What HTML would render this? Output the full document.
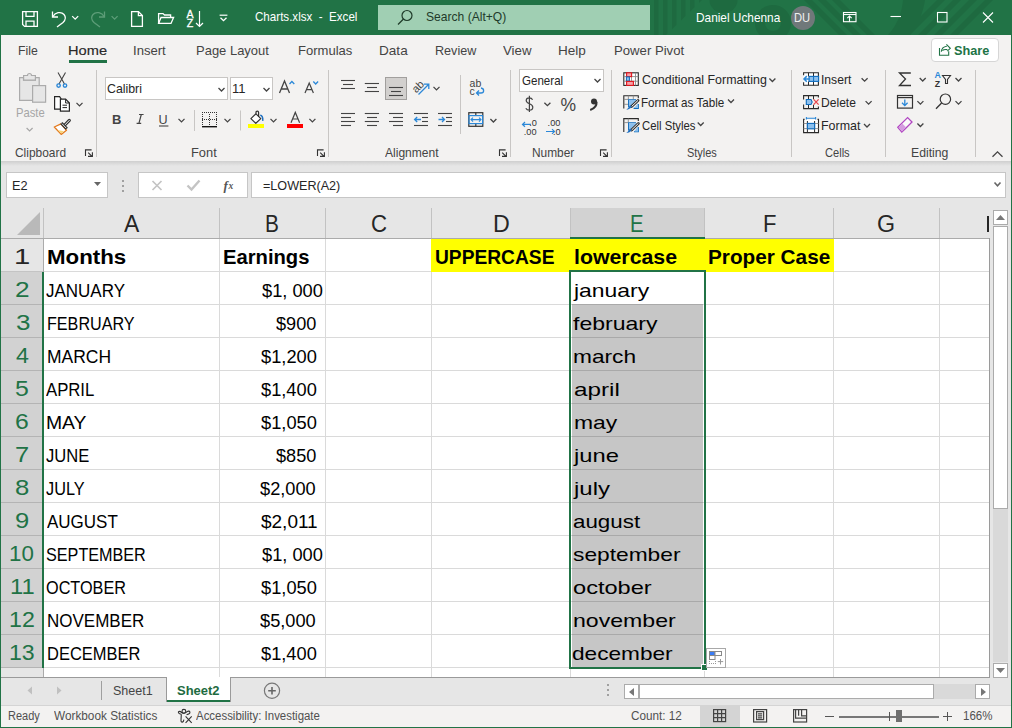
<!DOCTYPE html>
<html><head><meta charset="utf-8">
<style>
*{margin:0;padding:0;box-sizing:border-box}
html,body{width:1012px;height:728px;overflow:hidden;background:#217346;font-family:"Liberation Sans",sans-serif}
.a{position:absolute}
.t{position:absolute;white-space:nowrap;line-height:1}
svg{position:absolute;overflow:visible}
</style></head><body>
<div class="a" style="left:0px;top:0px;width:1012px;height:35px;background:#217346;"></div>
<svg style="left:0;top:0" width="1012" height="35" viewBox="0 0 1012 35"><defs><clipPath id="cp1"><path d="M652 0H702L666 35H652Z"/></clipPath></defs><g clip-path="url(#cp1)"><rect x="654" y="0" width="4.5" height="35" fill="#1e6a40"/><rect x="663" y="0" width="4.5" height="35" fill="#1e6a40"/><rect x="672" y="0" width="4.5" height="35" fill="#1e6a40"/><rect x="681" y="0" width="4.5" height="35" fill="#1e6a40"/><rect x="690" y="0" width="4.5" height="35" fill="#1e6a40"/><rect x="699" y="0" width="4.5" height="35" fill="#1e6a40"/></g><path d="M709.5 0A14 13 0 0 0 737.5 0Z" fill="#1e6a40"/><circle cx="773" cy="23" r="13" fill="none" stroke="#1e6a40" stroke-width="10"/><path d="M804 0L812 0L847 35L839 35Z" fill="#1e6a40"/><path d="M818 0L826 0L861 35L853 35Z" fill="#1e6a40"/><path d="M832 0L840 0L875 35L867 35Z" fill="#1e6a40"/><path d="M903 0L925 0C923 13 918 25 910 35L888 35C897 25 902 13 903 0Z" fill="#1e6a40"/><path d="M937 0L945 0L910 35L902 35Z" fill="#1e6a40"/><path d="M953 0L961 0L926 35L918 35Z" fill="#1e6a40"/><path d="M969 0L977 0L942 35L934 35Z" fill="#1e6a40"/><path d="M985 0L993 0L958 35L950 35Z" fill="#1e6a40"/></svg>
<svg style="left:0;top:0" width="240" height="35" viewBox="0 0 240 35"><g fill="none" stroke="#fff" stroke-width="1.3"><path d="M22.6 11.6H37.4V26.4H24.6L22.6 24.4Z"/><path d="M26 11.6V16.4H34V11.6"/><path d="M26 26.4V21.2H34V26.4"/><path d="M52.5 11.5V17H58"/><path d="M52.8 16.8C55 12.5 61 11 64 14.5C66.5 17.5 65 20.5 63 22.5L57 27"/><path d="M72.2 16.1L75.2 19.1L78.2 16.1" fill="none" stroke="#fff" stroke-width="1.3"/></g><g fill="none" stroke="#5d9d78" stroke-width="1.3"><path d="M104.5 11.5V17H99"/><path d="M104.2 16.8C102 12.5 96 11 93 14.5C90.5 17.5 92 20.5 94 22.5L100 27"/><path d="M111.6 16.1L114.6 19.1L117.6 16.1" fill="none" stroke="#5d9d78" stroke-width="1.3"/></g><g fill="none" stroke="#fff" stroke-width="1.3"><path d="M131.6 11.6H138.4L142.4 15.6V26.4H131.6Z"/><path d="M138.4 11.6V15.6H142.4"/><path d="M158.6 23.4V13.6H163L164.5 15H170.6V17.5"/><path d="M158.6 23.4L161 17.5H173.6L171 23.4Z"/></g><text x="186.6" y="18.2" font-size="10.6" font-weight="normal" stroke="#fff" stroke-width="0.3" fill="#fff" font-family="Liberation Sans">A</text><text x="186.8" y="27.2" font-size="10.6" font-weight="normal" stroke="#fff" stroke-width="0.3" fill="#fff" font-family="Liberation Sans">Z</text><g fill="none" stroke="#fff" stroke-width="1.2"><path d="M199.5 11V26.5M196 23L199.5 26.5L203 23"/><path d="M219.6 15.2H227.4"/><path d="M220.5 17.7L223.5 20.7L226.5 17.7" fill="none" stroke="#fff" stroke-width="1.3"/></g></svg>
<div class="t" style="left:255.28px;top:11.33px;font-size:12.6px;color:#fff;font-weight:normal;transform:scaleX(0.9207);transform-origin:0 0;">Charts.xlsx  -  Excel</div>
<div class="a" style="left:378px;top:5px;width:272px;height:25px;background:#a0cfb3;"></div>
<svg style="left:396px;top:9px;" width="18" height="18" viewBox="0 0 18 18"><g fill="none" stroke="#1f3b2a" stroke-width="1.2"><circle cx="11" cy="6.5" r="5"/><path d="M7.5 10L2 15.5"/></g></svg>
<div class="t" style="left:425.74px;top:11.33px;font-size:12.6px;color:#1f3b2a;font-weight:normal;transform:scaleX(0.9593);transform-origin:0 0;">Search (Alt+Q)</div>
<div class="t" style="left:695.98px;top:12.33px;font-size:12.6px;color:#fff;font-weight:normal;transform:scaleX(0.9402);transform-origin:0 0;">Daniel Uchenna</div>
<div class="a" style="left:791px;top:6px;width:24px;height:24px;border-radius:50%;background:#70787a"></div><div class="t" style="left:794.31px;top:11.84px;font-size:12px;color:#f0f0f0;font-weight:normal;transform:scaleX(0.9333);transform-origin:0 0;">DU</div>
<svg style="left:0;top:0" width="1012" height="35" viewBox="0 0 1012 35"><g fill="none" stroke="#fff" stroke-width="1.1"><rect x="843.5" y="12.5" width="12.5" height="9.2"/><path d="M843.5 14.5H856"/><path d="M849.5 21.7V16M847.3 18.2L849.5 16L851.7 18.2"/><path d="M890.5 16.5H901"/><rect x="937.5" y="12.5" width="9.5" height="9.5"/><path d="M983 12.5L993 22.5M993 12.5L983 22.5"/></g></svg>
<div class="a" style="left:1px;top:35px;width:1010px;height:126px;background:#f3f2f1;"></div>
<div class="t" style="left:17.56px;top:45.33px;font-size:12.6px;color:#444;font-weight:normal;transform:scaleX(0.9737);transform-origin:0 0;">File</div>
<div class="t" style="left:67.99px;top:45.33px;font-size:12.6px;color:#262626;font-weight:normal;transform:scaleX(1.1613);transform-origin:0 0;-webkit-text-stroke:0.15px #333">Home</div>
<div class="t" style="left:132.99px;top:45.33px;font-size:12.6px;color:#444;font-weight:normal;transform:scaleX(1.0398);transform-origin:0 0;">Insert</div>
<div class="t" style="left:196.03px;top:45.33px;font-size:12.6px;color:#444;font-weight:normal;transform:scaleX(1.0306);transform-origin:0 0;">Page Layout</div>
<div class="t" style="left:297.67px;top:45.33px;font-size:12.6px;color:#444;font-weight:normal;transform:scaleX(1.0362);transform-origin:0 0;">Formulas</div>
<div class="t" style="left:379.11px;top:45.33px;font-size:12.6px;color:#444;font-weight:normal;transform:scaleX(1.0784);transform-origin:0 0;">Data</div>
<div class="t" style="left:434.78px;top:45.33px;font-size:12.6px;color:#444;font-weight:normal;transform:scaleX(0.9998);transform-origin:0 0;">Review</div>
<div class="t" style="left:502.84px;top:45.33px;font-size:12.6px;color:#444;font-weight:normal;transform:scaleX(1.0531);transform-origin:0 0;">View</div>
<div class="t" style="left:557.67px;top:45.33px;font-size:12.6px;color:#444;font-weight:normal;transform:scaleX(1.0766);transform-origin:0 0;">Help</div>
<div class="t" style="left:614.35px;top:45.33px;font-size:12.6px;color:#444;font-weight:normal;transform:scaleX(1.0436);transform-origin:0 0;">Power Pivot</div>
<div class="a" style="left:69px;top:60px;width:38px;height:3px;background:#217346;"></div>
<div class="a" style="left:931px;top:38px;width:68px;height:24px;background:#fff;border:1px solid #d6d6d6;border-radius:4px"></div><svg style="left:0;top:0" width="1012" height="728" viewBox="0 0 1012 728"><g fill="none" stroke="#217346" stroke-width="1.1"><path d="M939.5 48V55.3H948.7V51.2"/><path d="M941.3 51.8C941.6 48.4 943.6 46.6 946.8 46.2"/><path d="M942.4 50.6C943.4 49.6 945.4 49.3 947.4 49.6"/><path d="M946.4 44.3L950.3 48.3L947.3 51.1"/></g></svg>
<div class="t" style="left:953.83px;top:44.00px;font-size:13px;color:#217346;font-weight:bold;transform:scaleX(0.9780);transform-origin:0 0;">Share</div>
<div class="a" style="left:96px;top:70px;width:1px;height:87px;background:#c8c6c4;"></div>
<div class="a" style="left:328px;top:70px;width:1px;height:87px;background:#c8c6c4;"></div>
<div class="a" style="left:510px;top:70px;width:1px;height:87px;background:#c8c6c4;"></div>
<div class="a" style="left:611px;top:70px;width:1px;height:87px;background:#c8c6c4;"></div>
<div class="a" style="left:791px;top:70px;width:1px;height:87px;background:#c8c6c4;"></div>
<div class="a" style="left:885px;top:70px;width:1px;height:87px;background:#c8c6c4;"></div>
<div class="a" style="left:975px;top:70px;width:1px;height:87px;background:#c8c6c4;"></div>
<div class="t" style="left:15.04px;top:146.67px;font-size:12.2px;color:#444;font-weight:normal;transform:scaleX(0.9778);transform-origin:0 0;">Clipboard</div>
<div class="t" style="left:190.72px;top:146.67px;font-size:12.2px;color:#444;font-weight:normal;transform:scaleX(1.0550);transform-origin:0 0;">Font</div>
<div class="t" style="left:384.73px;top:146.67px;font-size:12.2px;color:#444;font-weight:normal;transform:scaleX(0.9892);transform-origin:0 0;">Alignment</div>
<div class="t" style="left:531.55px;top:146.67px;font-size:12.2px;color:#444;font-weight:normal;transform:scaleX(0.9761);transform-origin:0 0;">Number</div>
<div class="t" style="left:686.86px;top:146.67px;font-size:12.2px;color:#444;font-weight:normal;transform:scaleX(0.8992);transform-origin:0 0;">Styles</div>
<div class="t" style="left:825.33px;top:146.67px;font-size:12.2px;color:#444;font-weight:normal;transform:scaleX(0.9095);transform-origin:0 0;">Cells</div>
<div class="t" style="left:911.24px;top:146.67px;font-size:12.2px;color:#444;font-weight:normal;transform:scaleX(1.0036);transform-origin:0 0;">Editing</div>
<svg style="left:0;top:0" width="1012" height="728" viewBox="0 0 1012 728"><path d="M85.5 156V149.9H91.6" fill="none" stroke="#333" stroke-width="1.1"/><path d="M88.2 152.6L92 156.4M88 156.4H92.4V152.2" fill="none" stroke="#333" stroke-width="1.1"/><path d="M317.5 156V149.9H323.6" fill="none" stroke="#333" stroke-width="1.1"/><path d="M320.2 152.6L324 156.4M320 156.4H324.4V152.2" fill="none" stroke="#333" stroke-width="1.1"/><path d="M499.5 156V149.9H505.6" fill="none" stroke="#333" stroke-width="1.1"/><path d="M502.2 152.6L506 156.4M502 156.4H506.4V152.2" fill="none" stroke="#333" stroke-width="1.1"/><path d="M600.5 156V149.9H606.6" fill="none" stroke="#333" stroke-width="1.1"/><path d="M603.2 152.6L607 156.4M603 156.4H607.4V152.2" fill="none" stroke="#333" stroke-width="1.1"/><path d="M992.5 156.8L997.5 151.8L1002.5 156.8" fill="none" stroke="#444" stroke-width="1.3"/></svg>
<div class="t" style="left:16.13px;top:107.37px;font-size:12.2px;color:#a6a6a6;font-weight:normal;transform:scaleX(0.9219);transform-origin:0 0;">Paste</div>
<div class="a" style="left:105px;top:77px;width:123px;height:23px;background:#fff;border:1px solid #c8c6c4"></div><div class="t" style="left:107.38px;top:82.67px;font-size:12.2px;color:#262626;font-weight:normal;transform:scaleX(1.0123);transform-origin:0 0;">Calibri</div>
<div class="a" style="left:230px;top:77px;width:43px;height:23px;background:#fff;border:1px solid #c8c6c4"></div><div class="t" style="left:231.62px;top:82.67px;font-size:12.2px;color:#262626;font-weight:normal;transform:scaleX(1.0687);transform-origin:0 0;">11</div>
<div class="a" style="left:519px;top:69px;width:85px;height:23px;background:#fff;border:1px solid #c8c6c4"></div><div class="t" style="left:521.88px;top:74.67px;font-size:12.2px;color:#262626;font-weight:normal;transform:scaleX(0.9490);transform-origin:0 0;">General</div>
<div class="t" style="left:642.17px;top:74.13px;font-size:12.6px;color:#262626;font-weight:normal;transform:scaleX(0.9851);transform-origin:0 0;">Conditional Formatting</div>
<div class="t" style="left:641.36px;top:96.93px;font-size:12.6px;color:#262626;font-weight:normal;transform:scaleX(0.9247);transform-origin:0 0;">Format as Table</div>
<div class="t" style="left:642.19px;top:120.03px;font-size:12.6px;color:#262626;font-weight:normal;transform:scaleX(0.8990);transform-origin:0 0;">Cell Styles</div>
<div class="t" style="left:820.85px;top:74.13px;font-size:12.6px;color:#262626;font-weight:normal;transform:scaleX(0.9626);transform-origin:0 0;">Insert</div>
<div class="t" style="left:820.85px;top:97.03px;font-size:12.6px;color:#262626;font-weight:normal;transform:scaleX(0.9594);transform-origin:0 0;">Delete</div>
<div class="t" style="left:820.85px;top:119.93px;font-size:12.6px;color:#262626;font-weight:normal;transform:scaleX(0.9884);transform-origin:0 0;">Format</div>
<svg style="left:0;top:0" width="1012" height="728" viewBox="0 0 1012 728"><g stroke="#ababab" stroke-width="1.2" fill="#e6e6e6"><path d="M19.6 77.6H23.5V80.2H35.4V77.6H39.2V100.4H19.6Z"/><path d="M23.6 80.2V75.5H27.5A2 2 0 0 1 31.5 75.5H35.4V80.2Z"/><rect x="32.6" y="85.6" width="13" height="16.6"/></g><path d="M26.6 128.0L29.6 131.0L32.6 128.0" fill="none" stroke="#a6a6a6" stroke-width="1.2"/><g fill="none" stroke="#444" stroke-width="1.1"><path d="M58 72.5L64.5 84M65.5 72.5L59 84"/></g><g fill="none" stroke="#2b88d8" stroke-width="1.4"><circle cx="58.6" cy="85.6" r="1.7"/><circle cx="65" cy="85.6" r="1.7"/></g><g fill="#fff" stroke="#262626" stroke-width="1.2"><path d="M54.6 96.6H59.6L61 98.6V109.2H54.6Z"/><path d="M60.4 99.2H65.6L69.4 103V111.2H60.4Z"/></g><path d="M62.5 105.2H67M62.5 107.6H67" stroke="#262626" stroke-width="1"/><path d="M65.6 99.2V103H69.4" fill="none" stroke="#262626" stroke-width="1"/><path d="M76.5 102.9L79.5 105.9L82.5 102.9" fill="none" stroke="#444" stroke-width="1.3"/><path d="M54.3 127L60.9 123.9L66.5 130.2L61.2 134.4Z" fill="#fff" stroke="#e3791e" stroke-width="1.3" stroke-linejoin="round"/><path d="M57.5 130L64 131.2L61.2 133.4Z" fill="#f7d57a"/><path d="M64.3 125.5L69.3 120.4" stroke="#333" stroke-width="3.2" stroke-linecap="round"/><path d="M64.3 125.5L69.3 120.4" stroke="#fff" stroke-width="1" stroke-linecap="round"/><path d="M61.3 122.9L66.8 128.8" stroke="#333" stroke-width="3"/><path d="M61.9 123.6L66.2 128.1" stroke="#fff" stroke-width="0.9"/><path d="M218.5 88.0L221.5 91.0L224.5 88.0" fill="none" stroke="#444" stroke-width="1.3"/><path d="M263.5 88.0L266.5 91.0L269.5 88.0" fill="none" stroke="#444" stroke-width="1.3"/><path d="M279.5 93L284.5 81L289.5 93M281.3 89H287.7" fill="none" stroke="#444" stroke-width="1.3"/><path d="M289.5 84L291.9 81.5L294.3 84" fill="none" stroke="#2b88d8" stroke-width="1.3"/><path d="M305 93L309.2 83L313.4 93M306.6 89.6H311.8" fill="none" stroke="#444" stroke-width="1.2"/><path d="M313.3 81.5L315.7 84L318.1 81.5" fill="none" stroke="#2b88d8" stroke-width="1.3"/><text x="112" y="124" font-size="13" font-weight="bold" fill="#444" font-family="Liberation Sans">B</text><path d="M139 114.5H143.6M136.6 123.4H141.2M141.3 114.5L138.9 123.4" fill="none" stroke="#444" stroke-width="1.2"/><text x="158.6" y="123.5" font-size="12.6" fill="#444" font-family="Liberation Sans">U</text><path d="M159 126H168.4" stroke="#444" stroke-width="1.1"/><path d="M178.5 118.9L181.5 121.9L184.5 118.9" fill="none" stroke="#444" stroke-width="1.3"/><rect x="194" y="110" width="1" height="21" fill="#c8c6c4"/><rect x="240" y="110.5" width="1" height="20" fill="#c8c6c4"/><g fill="#333"><rect x="202" y="112" width="1" height="1"/><rect x="202" y="119" width="1" height="1"/><rect x="204" y="112" width="1" height="1"/><rect x="204" y="119" width="1" height="1"/><rect x="206" y="112" width="1" height="1"/><rect x="206" y="119" width="1" height="1"/><rect x="208" y="112" width="1" height="1"/><rect x="208" y="119" width="1" height="1"/><rect x="210" y="112" width="1" height="1"/><rect x="210" y="119" width="1" height="1"/><rect x="212" y="112" width="1" height="1"/><rect x="212" y="119" width="1" height="1"/><rect x="214" y="112" width="1" height="1"/><rect x="214" y="119" width="1" height="1"/><rect x="216" y="112" width="1" height="1"/><rect x="216" y="119" width="1" height="1"/><rect x="202" y="114" width="1" height="1"/><rect x="209" y="114" width="1" height="1"/><rect x="216" y="114" width="1" height="1"/><rect x="202" y="116" width="1" height="1"/><rect x="209" y="116" width="1" height="1"/><rect x="216" y="116" width="1" height="1"/><rect x="202" y="118" width="1" height="1"/><rect x="209" y="118" width="1" height="1"/><rect x="216" y="118" width="1" height="1"/><rect x="202" y="120" width="1" height="1"/><rect x="209" y="120" width="1" height="1"/><rect x="216" y="120" width="1" height="1"/><rect x="202" y="122" width="1" height="1"/><rect x="209" y="122" width="1" height="1"/><rect x="216" y="122" width="1" height="1"/><rect x="202" y="124" width="1" height="1"/><rect x="209" y="124" width="1" height="1"/><rect x="216" y="124" width="1" height="1"/></g><rect x="202" y="126" width="15" height="1.4" fill="#111"/><path d="M224.5 118.9L227.5 121.9L230.5 118.9" fill="none" stroke="#444" stroke-width="1.3"/><path d="M250.9 118.6L256 113.8L260.8 118.6L255.8 123.3Z" fill="#fff" stroke="#333" stroke-width="1.2" stroke-linejoin="round"/><path d="M256 113.8V112.4A1.3 1.3 0 0 1 258.6 112.4V117" fill="none" stroke="#333" stroke-width="1.2"/><path d="M260.2 115.2C262 115.4 263.2 117.4 262.7 120.8" fill="none" stroke="#1e6fc0" stroke-width="1.5"/><rect x="248" y="124" width="16" height="4" fill="#ffff00"/><path d="M270.5 118.9L273.5 121.9L276.5 118.9" fill="none" stroke="#444" stroke-width="1.3"/><path d="M291 122.7L295.3 112.4L299.6 122.7M292.6 119H298" fill="none" stroke="#444" stroke-width="1.2"/><rect x="287" y="124" width="16" height="4" fill="#ff0000"/><path d="M309.4 118.9L312.4 121.9L315.4 118.9" fill="none" stroke="#444" stroke-width="1.3"/><path d="M341 80.5H355" stroke="#444" stroke-width="1.1"/><path d="M343 84.5H353" stroke="#444" stroke-width="1.1"/><path d="M341 88.5H355" stroke="#444" stroke-width="1.1"/><path d="M364.8 83.5H379" stroke="#444" stroke-width="1.1"/><path d="M367 87.5H377" stroke="#444" stroke-width="1.1"/><path d="M364.8 91.5H379" stroke="#444" stroke-width="1.1"/><rect x="385.5" y="77.5" width="21" height="22" fill="#d2d0ce" stroke="#a19f9d" stroke-width="1"/><path d="M389 87.5H403" stroke="#444" stroke-width="1.1"/><path d="M391 91.5H401" stroke="#444" stroke-width="1.1"/><path d="M389 95.5H403" stroke="#444" stroke-width="1.1"/><path d="M341 113.5H355" stroke="#444" stroke-width="1.1"/><path d="M341 117.5H351" stroke="#444" stroke-width="1.1"/><path d="M341 121.5H355" stroke="#444" stroke-width="1.1"/><path d="M341 125.5H351" stroke="#444" stroke-width="1.1"/><path d="M364.8 113.5H379" stroke="#444" stroke-width="1.1"/><path d="M367 117.5H377" stroke="#444" stroke-width="1.1"/><path d="M364.8 121.5H379" stroke="#444" stroke-width="1.1"/><path d="M367 125.5H377" stroke="#444" stroke-width="1.1"/><path d="M389 113.5H403" stroke="#444" stroke-width="1.1"/><path d="M393 117.5H403" stroke="#444" stroke-width="1.1"/><path d="M389 121.5H403" stroke="#444" stroke-width="1.1"/><path d="M393 125.5H403" stroke="#444" stroke-width="1.1"/><path d="M414 113.5H428" stroke="#444" stroke-width="1.1"/><path d="M422 117.5H428" stroke="#444" stroke-width="1.1"/><path d="M422 121.5H428" stroke="#444" stroke-width="1.1"/><path d="M414 125.5H428" stroke="#444" stroke-width="1.1"/><path d="M421 119.5H414.6M417.2 117L414.6 119.5L417.2 122" fill="none" stroke="#2b88d8" stroke-width="1.3"/><path d="M438 113.5H452" stroke="#444" stroke-width="1.1"/><path d="M446 117.5H452" stroke="#444" stroke-width="1.1"/><path d="M446 121.5H452" stroke="#444" stroke-width="1.1"/><path d="M438 125.5H452" stroke="#444" stroke-width="1.1"/><path d="M438.5 119.5H444.5M442 117L444.5 119.5L442 122" fill="none" stroke="#2b88d8" stroke-width="1.3"/><text x="0" y="0" font-size="11" fill="#444" font-family="Liberation Sans" transform="translate(416.2 93.5) rotate(-45)">ab</text><path d="M418.5 94.5L428.5 84.5M424 84.2H428.8V89" fill="none" stroke="#2b88d8" stroke-width="1.3"/><path d="M433.5 86.9L436.5 89.9L439.5 86.9" fill="none" stroke="#444" stroke-width="1.3"/><rect x="460" y="75" width="1" height="59" fill="#c8c6c4"/><text x="469.6" y="87.4" font-size="10.5" fill="#444" font-family="Liberation Sans">ab</text><text x="469.6" y="95" font-size="10.5" fill="#444" font-family="Liberation Sans">c</text><path d="M481 88C484.5 88.5 484.5 93 481 93H476.5M479 90.5L476.5 93L479 95.5" fill="none" stroke="#2b88d8" stroke-width="1.3"/><g fill="none" stroke="#333" stroke-width="1.2"><rect x="468.8" y="112.7" width="14" height="13.6"/><path d="M475.8 112.7V115.5M475.8 123.5V126.3"/></g><rect x="469" y="115.6" width="13.6" height="8" fill="none" stroke="#2b88d8" stroke-width="1.2"/><path d="M471 119.6H481M473 117.6L471 119.6L473 121.6M479 117.6L481 119.6L479 121.6" fill="none" stroke="#2b88d8" stroke-width="1.1"/><path d="M490.4 119.0L493.4 122.0L496.4 119.0" fill="none" stroke="#444" stroke-width="1.3"/><path d="M594.5 79.0L597.5 82.0L600.5 79.0" fill="none" stroke="#444" stroke-width="1.3"/><path d="M532.6 99.8C531.8 98.2 530.6 97.8 529.3 97.8C527.3 97.8 526.2 99 526.2 100.6C526.2 104.4 532.8 103.2 532.8 107.2C532.8 109 531.4 110.2 529.3 110.2C527.8 110.2 526.6 109.6 525.8 108.2M529.4 95.8V112" fill="none" stroke="#444" stroke-width="1.2"/><path d="M544.4 102.7L547.4 105.7L550.4 102.7" fill="none" stroke="#444" stroke-width="1.3"/><text x="560.6" y="111.2" font-size="17.5" fill="#444" font-family="Liberation Sans">%</text><circle cx="594" cy="101.6" r="3" fill="#333"/><path d="M596.6 101.8C596.8 105.5 594.5 108.6 590.2 110" fill="none" stroke="#333" stroke-width="2"/><text x="529.2" y="126.4" font-size="9.2" fill="#333" font-family="Liberation Sans">.0</text><text x="523.8" y="134.8" font-size="9.2" fill="#333" font-family="Liberation Sans">.00</text><path d="M531 124.4H522.5M525 122L522.5 124.4L525 126.8" fill="none" stroke="#2b88d8" stroke-width="1.2"/><text x="547.6" y="126.4" font-size="9.2" fill="#333" font-family="Liberation Sans">.00</text><text x="553" y="134.8" font-size="9.2" fill="#333" font-family="Liberation Sans">.0</text><path d="M546 131.5H554.5M552 129.1L554.5 131.5L552 133.9" fill="none" stroke="#2b88d8" stroke-width="1.2"/><rect x="623.8" y="72.8" width="14.5" height="12.6" fill="#fff" stroke="#2a2a2a" stroke-width="1.1"/><path d="M623.8 76.6H638.3M623.8 81.2H638.3M635.5 72.8V85.4M631.5 76.6V81.2" stroke="#8a8a8a" stroke-width="0.9"/><rect x="626.6" y="72.8" width="5" height="3.8" fill="#f7a1a8" stroke="#e0161e" stroke-width="1.1"/><rect x="626.4" y="76.9" width="3" height="4.1" fill="#8cc0ee" stroke="#0f6cbd" stroke-width="1"/><rect x="626.6" y="81.4" width="6.8" height="4" fill="#f7a1a8" stroke="#e0161e" stroke-width="1.1"/><path d="M623.8 108.6V95.7H638.3V98.2" fill="none" stroke="#2a2a2a" stroke-width="1.1"/><path d="M623.8 99.4H628.6M623.8 104.3H628.6M628.4 95.7V99.2M633.3 95.7V99.2" stroke="#8a8a8a" stroke-width="0.9"/><path d="M628.6 107V99.7H636" fill="#8cc0ee" stroke="#0f6cbd" stroke-width="1.1"/><path d="M629 100H637L629 108Z" fill="#8cc0ee"/><path d="M638.3 104V108.4H633.6" fill="#8cc0ee" stroke="#0f6cbd" stroke-width="1.1"/><path d="M638 103L634.5 108H638Z" fill="#8cc0ee"/><path d="M638 100.4L631.5 106.6" stroke="#333" stroke-width="2.8" stroke-linecap="round"/><path d="M638 100.4L631.5 106.6" stroke="#fff" stroke-width="1"/><path d="M626.3 109.7C628.6 109.6 630.6 108.8 631.8 106.6L630.2 105.2C628.6 106.6 628.3 108.6 626.3 109.7Z" fill="#1e6fc0"/><path d="M728.0 99.5L731 102.5L734.0 99.5" fill="none" stroke="#444" stroke-width="1.3"/><path d="M623.8 132V118.6H638.3V121" fill="none" stroke="#2a2a2a" stroke-width="1.1"/><path d="M623.8 122.6H628.3M628.3 118.6V122.4" stroke="#8a8a8a" stroke-width="0.9"/><path d="M628.6 130.5V122.8H636" fill="none" stroke="#0f6cbd" stroke-width="1.1"/><path d="M629 123.2H637L629 131.2Z" fill="#8cc0ee"/><path d="M638.3 127V131.8H634" fill="#8cc0ee" stroke="#0f6cbd" stroke-width="1.1"/><path d="M638 126L634.5 131.5H638Z" fill="#8cc0ee"/><path d="M638.4 123.4L631.6 130" stroke="#333" stroke-width="2.8" stroke-linecap="round"/><path d="M638.4 123.4L631.6 130" stroke="#fff" stroke-width="1"/><path d="M626.3 133C628.6 132.9 630.6 132.1 631.8 130L630.2 128.6C628.6 130 628.3 131.9 626.3 133Z" fill="#1e6fc0"/><path d="M769.4 78.5L772.4 81.5L775.4 78.5" fill="none" stroke="#444" stroke-width="1.3"/><path d="M697.7 122.5L700.7 125.5L703.7 122.5" fill="none" stroke="#444" stroke-width="1.3"/><path d="M803.6 75.2V72.7H818.4V85.3H803.6V82.2" fill="#fff" stroke="#2a2a2a" stroke-width="1.1"/><path d="M808.5 72.7V76.4M813.5 72.7V76.4M808.5 81.4V85.3M813.5 81.4V85.3" stroke="#2a2a2a" stroke-width="1"/><rect x="809" y="76.4" width="9.6" height="5" fill="#8cc0ee" stroke="#0f6cbd" stroke-width="1.1"/><path d="M813.6 76.4V81.4" stroke="#0f6cbd" stroke-width="1"/><path d="M809.8 78.9H804.2M806.8 76.1L804 78.9L806.8 81.7" fill="none" stroke="#2b88d8" stroke-width="1.5"/><path d="M861.6 78.2L864.6 81.2L867.6 78.2" fill="none" stroke="#444" stroke-width="1.3"/><path d="M803.6 99.4V95.6H818.4V97.4M803.6 104.6V108.6H818.4V106.6" fill="none" stroke="#2a2a2a" stroke-width="1.1"/><path d="M808.5 95.6V99.2M813.5 95.6V99.2M808.5 104.8V108.6M813.5 104.8V108.6" stroke="#2a2a2a" stroke-width="1"/><path d="M806.3 99.5H811L812.2 102L811 104.5H806.3Z" fill="#8cc0ee" stroke="#0f6cbd" stroke-width="1.1"/><path d="M813.6 99.4L818.6 104.6M818.6 99.4L813.6 104.6" stroke="#e8474c" stroke-width="1.3"/><path d="M865.6 101.1L868.6 104.1L871.6 101.1" fill="none" stroke="#444" stroke-width="1.3"/><path d="M804.6 119.4H803.6V132.6H818.5V119.4H817.5" fill="#fff" stroke="#2a2a2a" stroke-width="1.1"/><path d="M807.4 121V132.6M814.6 121V132.6" stroke="#2a2a2a" stroke-width="1"/><path d="M803.6 123.5H818.5M803.6 128.6H818.5" stroke="#8a8a8a" stroke-width="0.9"/><rect x="807.4" y="123.4" width="7.2" height="5.4" fill="#8cc0ee" stroke="#0f6cbd" stroke-width="1.1"/><path d="M806.4 118.2H815.6M806.4 116.9V119.5M815.6 116.9V119.5" stroke="#2b88d8" stroke-width="1.1"/><path d="M864.0 124.0L867 127.0L870.0 124.0" fill="none" stroke="#444" stroke-width="1.3"/><path d="M910.8 73H899.5L905.5 79L899.5 85.5H911" fill="none" stroke="#333" stroke-width="1.3"/><path d="M919.7 78.0L922.7 81.0L925.7 78.0" fill="none" stroke="#444" stroke-width="1.3"/><text x="934.6" y="77.6" font-size="8.8" font-weight="bold" fill="#2b88d8" font-family="Liberation Sans">A</text><text x="934.8" y="86.8" font-size="8.8" font-weight="bold" fill="#333" font-family="Liberation Sans">Z</text><path d="M942.5 75.5H950.5L947.5 79.5V83.5H945.5V79.5Z" fill="none" stroke="#333" stroke-width="1.1"/><path d="M955.5 78.0L958.5 81.0L961.5 78.0" fill="none" stroke="#444" stroke-width="1.3"/><g fill="none" stroke="#333" stroke-width="1.2"><rect x="897.5" y="95.5" width="15" height="12.6"/><path d="M897.5 97.6H912.5"/></g><path d="M904.8 99.5V105.5M902 102.8L904.8 105.6L907.6 102.8" fill="none" stroke="#2b88d8" stroke-width="1.3"/><path d="M917.4 101.1L920.4 104.1L923.4 101.1" fill="none" stroke="#444" stroke-width="1.3"/><circle cx="945.4" cy="99.2" r="5.2" fill="#f3f2f1" stroke="#333" stroke-width="1.2"/><path d="M941.6 103L936 108.8" stroke="#333" stroke-width="1.3"/><path d="M955.5 101.1L958.5 104.1L961.5 101.1" fill="none" stroke="#444" stroke-width="1.3"/><path d="M897.8 127.3L904.5 120.6L907.6 117.6L912 122L905 129L901.8 132Z" fill="#fafafa" stroke="#b146c2" stroke-width="1.3"/><path d="M898.5 127.5L902.3 123.5L906 127.3L902 131.4Z" fill="#d59ee0"/><path d="M917.4 123.5L920.4 126.5L923.4 123.5" fill="none" stroke="#444" stroke-width="1.3"/></svg>
<div class="a" style="left:1px;top:161px;width:1010px;height:518px;background:#e6e6e6;"></div>
<div class="a" style="left:1px;top:161px;width:1010px;height:5px;background:linear-gradient(#cfcfcf,#e6e6e6)"></div><div class="a" style="left:6px;top:172px;width:102px;height:26px;background:#fff;border:1px solid #c6c6c6"></div><div class="t" style="left:12.26px;top:179.67px;font-size:12.2px;color:#262626;font-weight:normal;transform:scaleX(1.0441);transform-origin:0 0;">E2</div>
<svg style="left:94px;top:182px;" width="7" height="4" viewBox="0 0 7 4"><path d="M0 0H7L3.5 4Z" fill="#666"/></svg>
<svg style="left:122px;top:180px;" width="3" height="12" viewBox="0 0 3 12"><rect x="0" y="0" width="2" height="2" fill="#a0a0a0"/><rect x="0" y="5" width="2" height="2" fill="#a0a0a0"/><rect x="0" y="10" width="2" height="2" fill="#a0a0a0"/></svg>
<div class="a" style="left:138px;top:172px;width:110px;height:26px;background:#fff;border:1px solid #c6c6c6"></div><svg style="left:0;top:0" width="1012" height="728" viewBox="0 0 1012 728"><g fill="none" stroke="#c4c4c4" stroke-width="1.7"><path d="M152.5 181L161.5 190M161.5 181L152.5 190"/></g><path d="M187.5 185.5L191.5 189.5L199.5 180.5" fill="none" stroke="#c4c4c4" stroke-width="2.4"/><text x="223.6" y="190" font-size="13" font-weight="bold" font-style="italic" font-family="Liberation Serif" fill="#555">f</text><text x="228.6" y="189" font-size="9.5" font-weight="bold" font-style="italic" font-family="Liberation Serif" fill="#555">x</text></svg>
<div class="a" style="left:251px;top:172px;width:755px;height:26px;background:#fff;border:1px solid #c6c6c6"></div><div class="t" style="left:263.11px;top:179.87px;font-size:12.2px;color:#262626;font-weight:normal;transform:scaleX(1.0331);transform-origin:0 0;">=LOWER(A2)</div>
<svg style="left:994px;top:182px;" width="7" height="5" viewBox="0 0 7 5"><path d="M0.5 0.5L3.5 3.8L6.5 0.5" fill="none" stroke="#666" stroke-width="1.6"/></svg>
<div class="a" style="left:44px;top:239px;width:945px;height:438px;background:#fff;"></div>
<div class="a" style="left:1px;top:208px;width:988px;height:30px;background:#e6e6e6;"></div>
<div class="a" style="left:1px;top:239px;width:42px;height:438px;background:#e6e6e6;"></div>
<div class="a" style="left:1px;top:272px;width:41px;height:396px;background:#d2d2d2;"></div>
<div class="a" style="left:571px;top:208px;width:133px;height:30px;background:#d2d2d2;"></div>
<svg style="left:17px;top:212px;" width="24" height="23" viewBox="0 0 24 23"><path d="M23 0V23H0Z" fill="#b9b9b9"/></svg>
<div class="a" style="left:1px;top:238px;width:988px;height:1px;background:#ababab;"></div>
<div class="a" style="left:219px;top:208px;width:1px;height:30px;background:#c2c2c2;"></div>
<div class="a" style="left:325px;top:208px;width:1px;height:30px;background:#c2c2c2;"></div>
<div class="a" style="left:431px;top:208px;width:1px;height:30px;background:#c2c2c2;"></div>
<div class="a" style="left:570px;top:208px;width:1px;height:30px;background:#c2c2c2;"></div>
<div class="a" style="left:704px;top:208px;width:1px;height:30px;background:#c2c2c2;"></div>
<div class="a" style="left:833px;top:208px;width:1px;height:30px;background:#c2c2c2;"></div>
<div class="a" style="left:939px;top:208px;width:1px;height:30px;background:#c2c2c2;"></div>
<div class="a" style="left:43px;top:208px;width:1px;height:30px;background:#c2c2c2;"></div>
<div class="a" style="left:43px;top:239px;width:1px;height:438px;background:#ababab;"></div>
<div class="a" style="left:44px;top:271px;width:945px;height:1px;background:#dadada;"></div>
<div class="a" style="left:1px;top:271px;width:42px;height:1px;background:#c4c4c4;"></div>
<div class="a" style="left:44px;top:304px;width:945px;height:1px;background:#dadada;"></div>
<div class="a" style="left:1px;top:304px;width:42px;height:1px;background:#b4b4b4;"></div>
<div class="a" style="left:44px;top:337px;width:945px;height:1px;background:#dadada;"></div>
<div class="a" style="left:1px;top:337px;width:42px;height:1px;background:#b4b4b4;"></div>
<div class="a" style="left:44px;top:370px;width:945px;height:1px;background:#dadada;"></div>
<div class="a" style="left:1px;top:370px;width:42px;height:1px;background:#b4b4b4;"></div>
<div class="a" style="left:44px;top:403px;width:945px;height:1px;background:#dadada;"></div>
<div class="a" style="left:1px;top:403px;width:42px;height:1px;background:#b4b4b4;"></div>
<div class="a" style="left:44px;top:436px;width:945px;height:1px;background:#dadada;"></div>
<div class="a" style="left:1px;top:436px;width:42px;height:1px;background:#b4b4b4;"></div>
<div class="a" style="left:44px;top:469px;width:945px;height:1px;background:#dadada;"></div>
<div class="a" style="left:1px;top:469px;width:42px;height:1px;background:#b4b4b4;"></div>
<div class="a" style="left:44px;top:502px;width:945px;height:1px;background:#dadada;"></div>
<div class="a" style="left:1px;top:502px;width:42px;height:1px;background:#b4b4b4;"></div>
<div class="a" style="left:44px;top:535px;width:945px;height:1px;background:#dadada;"></div>
<div class="a" style="left:1px;top:535px;width:42px;height:1px;background:#b4b4b4;"></div>
<div class="a" style="left:44px;top:568px;width:945px;height:1px;background:#dadada;"></div>
<div class="a" style="left:1px;top:568px;width:42px;height:1px;background:#b4b4b4;"></div>
<div class="a" style="left:44px;top:601px;width:945px;height:1px;background:#dadada;"></div>
<div class="a" style="left:1px;top:601px;width:42px;height:1px;background:#b4b4b4;"></div>
<div class="a" style="left:44px;top:634px;width:945px;height:1px;background:#dadada;"></div>
<div class="a" style="left:1px;top:634px;width:42px;height:1px;background:#b4b4b4;"></div>
<div class="a" style="left:44px;top:667px;width:945px;height:1px;background:#dadada;"></div>
<div class="a" style="left:1px;top:667px;width:42px;height:1px;background:#b4b4b4;"></div>
<div class="a" style="left:44px;top:700px;width:945px;height:1px;background:#dadada;"></div>
<div class="a" style="left:1px;top:700px;width:42px;height:1px;background:#b4b4b4;"></div>
<div class="a" style="left:219px;top:239px;width:1px;height:438px;background:#dadada;"></div>
<div class="a" style="left:325px;top:239px;width:1px;height:438px;background:#dadada;"></div>
<div class="a" style="left:431px;top:239px;width:1px;height:438px;background:#dadada;"></div>
<div class="a" style="left:570px;top:239px;width:1px;height:438px;background:#dadada;"></div>
<div class="a" style="left:704px;top:239px;width:1px;height:438px;background:#dadada;"></div>
<div class="a" style="left:833px;top:239px;width:1px;height:438px;background:#dadada;"></div>
<div class="a" style="left:939px;top:239px;width:1px;height:438px;background:#dadada;"></div>
<div class="a" style="left:431px;top:239px;width:403px;height:33px;background:#ffff00;"></div>
<div class="a" style="left:572px;top:305px;width:131px;height:362px;background:#c6c6c6;"></div>
<div class="a" style="left:572px;top:337px;width:131px;height:1px;background:#a9a9a9;"></div>
<div class="a" style="left:572px;top:370px;width:131px;height:1px;background:#a9a9a9;"></div>
<div class="a" style="left:572px;top:403px;width:131px;height:1px;background:#a9a9a9;"></div>
<div class="a" style="left:572px;top:436px;width:131px;height:1px;background:#a9a9a9;"></div>
<div class="a" style="left:572px;top:469px;width:131px;height:1px;background:#a9a9a9;"></div>
<div class="a" style="left:572px;top:502px;width:131px;height:1px;background:#a9a9a9;"></div>
<div class="a" style="left:572px;top:535px;width:131px;height:1px;background:#a9a9a9;"></div>
<div class="a" style="left:572px;top:568px;width:131px;height:1px;background:#a9a9a9;"></div>
<div class="a" style="left:572px;top:601px;width:131px;height:1px;background:#a9a9a9;"></div>
<div class="a" style="left:572px;top:634px;width:131px;height:1px;background:#a9a9a9;"></div>
<div class="a" style="left:572px;top:304px;width:131px;height:1px;background:#a9a9a9;"></div>
<div class="a" style="left:42px;top:272px;width:2px;height:396px;background:#217346;"></div>
<div class="a" style="left:570px;top:237px;width:135px;height:2px;background:#217346;"></div>
<div class="a" style="left:569px;top:270px;width:137px;height:399px;border:2px solid #217346"></div>
<div class="a" style="left:702px;top:665px;width:5px;height:5px;background:#217346;outline:1px solid #fff"></div>
<div class="t" style="left:123.88px;top:212.53px;font-size:23px;color:#262626;font-weight:normal;transform:scaleX(0.9967);transform-origin:0 0;">A</div>
<div class="t" style="left:265.17px;top:212.53px;font-size:23px;color:#262626;font-weight:normal;transform:scaleX(0.9053);transform-origin:0 0;">B</div>
<div class="t" style="left:371.29px;top:212.53px;font-size:23px;color:#262626;font-weight:normal;transform:scaleX(0.9672);transform-origin:0 0;">C</div>
<div class="t" style="left:493.17px;top:212.53px;font-size:23px;color:#262626;font-weight:normal;transform:scaleX(1.0106);transform-origin:0 0;">D</div>
<div class="t" style="left:630.35px;top:212.53px;font-size:23px;color:#217346;font-weight:normal;transform:scaleX(0.8827);transform-origin:0 0;">E</div>
<div class="t" style="left:762.58px;top:212.53px;font-size:23px;color:#262626;font-weight:normal;transform:scaleX(0.9582);transform-origin:0 0;">F</div>
<div class="t" style="left:876.75px;top:212.53px;font-size:23px;color:#262626;font-weight:normal;transform:scaleX(1.0088);transform-origin:0 0;">G</div>
<div class="a" style="left:987px;top:216px;width:1.5px;height:16px;background:#262626;"></div>
<div class="t" style="left:13.82px;top:246.38px;font-size:22px;color:#262626;font-weight:normal;transform:scaleX(1.3307);transform-origin:0 0;">1</div>
<div class="t" style="left:14.85px;top:279.38px;font-size:22px;color:#217346;font-weight:normal;transform:scaleX(1.1933);transform-origin:0 0;">2</div>
<div class="t" style="left:15.65px;top:312.38px;font-size:22px;color:#217346;font-weight:normal;transform:scaleX(1.1832);transform-origin:0 0;">3</div>
<div class="t" style="left:16.47px;top:345.38px;font-size:22px;color:#217346;font-weight:normal;transform:scaleX(1.0568);transform-origin:0 0;">4</div>
<div class="t" style="left:15.25px;top:378.38px;font-size:22px;color:#217346;font-weight:normal;transform:scaleX(1.1285);transform-origin:0 0;">5</div>
<div class="t" style="left:15.40px;top:411.38px;font-size:22px;color:#217346;font-weight:normal;transform:scaleX(1.1236);transform-origin:0 0;">6</div>
<div class="t" style="left:15.35px;top:444.38px;font-size:22px;color:#217346;font-weight:normal;transform:scaleX(1.1561);transform-origin:0 0;">7</div>
<div class="t" style="left:15.40px;top:477.38px;font-size:22px;color:#217346;font-weight:normal;transform:scaleX(1.1669);transform-origin:0 0;">8</div>
<div class="t" style="left:15.04px;top:510.38px;font-size:22px;color:#217346;font-weight:normal;transform:scaleX(1.1628);transform-origin:0 0;">9</div>
<div class="t" style="left:9.30px;top:543.38px;font-size:22px;color:#217346;font-weight:normal;transform:scaleX(1.0148);transform-origin:0 0;">10</div>
<div class="t" style="left:9.99px;top:576.38px;font-size:22px;color:#217346;font-weight:normal;transform:scaleX(1.0799);transform-origin:0 0;">11</div>
<div class="t" style="left:9.17px;top:609.38px;font-size:22px;color:#217346;font-weight:normal;transform:scaleX(1.0539);transform-origin:0 0;">12</div>
<div class="t" style="left:9.21px;top:642.38px;font-size:22px;color:#217346;font-weight:normal;transform:scaleX(1.0506);transform-origin:0 0;">13</div>
<div class="t" style="left:46.74px;top:246.22px;font-size:21px;color:#000;font-weight:bold;transform:scaleX(1.0615);transform-origin:0 0;">Months</div>
<div class="t" style="left:223.29px;top:246.22px;font-size:21px;color:#000;font-weight:bold;transform:scaleX(0.9619);transform-origin:0 0;">Earnings</div>
<div class="t" style="left:434.75px;top:246.22px;font-size:21px;color:#000;font-weight:bold;transform:scaleX(0.9139);transform-origin:0 0;">UPPERCASE</div>
<div class="t" style="left:573.66px;top:246.22px;font-size:21px;color:#000;font-weight:bold;transform:scaleX(1.0149);transform-origin:0 0;">lowercase</div>
<div class="t" style="left:707.51px;top:246.22px;font-size:21px;color:#000;font-weight:bold;transform:scaleX(0.9877);transform-origin:0 0;">Proper Case</div>
<div class="t" style="left:46.46px;top:282.26px;font-size:18.6px;color:#000;font-weight:normal;transform:scaleX(0.9135);transform-origin:0 0;">JANUARY</div>
<div class="t" style="left:261.94px;top:282.26px;font-size:18.6px;color:#000;font-weight:normal;transform:scaleX(0.9818);transform-origin:0 0;">$1, 000</div>
<div class="t" style="left:574.12px;top:282.26px;font-size:18.6px;color:#000;font-weight:normal;transform:scaleX(1.2322);transform-origin:0 0;">january</div>
<div class="t" style="left:46.78px;top:315.26px;font-size:18.6px;color:#000;font-weight:normal;transform:scaleX(0.8679);transform-origin:0 0;">FEBRUARY</div>
<div class="t" style="left:275.71px;top:315.26px;font-size:18.6px;color:#000;font-weight:normal;transform:scaleX(0.9759);transform-origin:0 0;">$900</div>
<div class="t" style="left:573.48px;top:315.26px;font-size:18.6px;color:#000;font-weight:normal;transform:scaleX(1.2385);transform-origin:0 0;">february</div>
<div class="t" style="left:46.53px;top:348.26px;font-size:18.6px;color:#000;font-weight:normal;transform:scaleX(0.9400);transform-origin:0 0;">MARCH</div>
<div class="t" style="left:260.97px;top:348.26px;font-size:18.6px;color:#000;font-weight:normal;transform:scaleX(0.9829);transform-origin:0 0;">$1,200</div>
<div class="t" style="left:573.47px;top:348.26px;font-size:18.6px;color:#000;font-weight:normal;transform:scaleX(1.2211);transform-origin:0 0;">march</div>
<div class="t" style="left:45.93px;top:381.26px;font-size:18.6px;color:#000;font-weight:normal;transform:scaleX(0.8990);transform-origin:0 0;">APRIL</div>
<div class="t" style="left:260.95px;top:381.26px;font-size:18.6px;color:#000;font-weight:normal;transform:scaleX(0.9807);transform-origin:0 0;">$1,400</div>
<div class="t" style="left:573.61px;top:381.26px;font-size:18.6px;color:#000;font-weight:normal;transform:scaleX(1.3050);transform-origin:0 0;">april</div>
<div class="t" style="left:46.17px;top:414.26px;font-size:18.6px;color:#000;font-weight:normal;transform:scaleX(1.0408);transform-origin:0 0;">MAY</div>
<div class="t" style="left:260.97px;top:414.26px;font-size:18.6px;color:#000;font-weight:normal;transform:scaleX(0.9829);transform-origin:0 0;">$1,050</div>
<div class="t" style="left:573.80px;top:414.26px;font-size:18.6px;color:#000;font-weight:normal;transform:scaleX(1.2325);transform-origin:0 0;">may</div>
<div class="t" style="left:46.44px;top:447.26px;font-size:18.6px;color:#000;font-weight:normal;transform:scaleX(0.8907);transform-origin:0 0;">JUNE</div>
<div class="t" style="left:275.71px;top:447.26px;font-size:18.6px;color:#000;font-weight:normal;transform:scaleX(0.9759);transform-origin:0 0;">$850</div>
<div class="t" style="left:574.32px;top:447.26px;font-size:18.6px;color:#000;font-weight:normal;transform:scaleX(1.2750);transform-origin:0 0;">june</div>
<div class="t" style="left:45.61px;top:480.26px;font-size:18.6px;color:#000;font-weight:normal;transform:scaleX(0.8748);transform-origin:0 0;">JULY</div>
<div class="t" style="left:260.10px;top:480.26px;font-size:18.6px;color:#000;font-weight:normal;transform:scaleX(0.9798);transform-origin:0 0;">$2,000</div>
<div class="t" style="left:574.37px;top:480.26px;font-size:18.6px;color:#000;font-weight:normal;transform:scaleX(1.2891);transform-origin:0 0;">july</div>
<div class="t" style="left:46.52px;top:513.26px;font-size:18.6px;color:#000;font-weight:normal;transform:scaleX(0.9138);transform-origin:0 0;">AUGUST</div>
<div class="t" style="left:260.71px;top:513.26px;font-size:18.6px;color:#000;font-weight:normal;transform:scaleX(1.0211);transform-origin:0 0;">$2,011</div>
<div class="t" style="left:572.71px;top:513.26px;font-size:18.6px;color:#000;font-weight:normal;transform:scaleX(1.2022);transform-origin:0 0;">august</div>
<div class="t" style="left:46.05px;top:546.26px;font-size:18.6px;color:#000;font-weight:normal;transform:scaleX(0.8703);transform-origin:0 0;">SEPTEMBER</div>
<div class="t" style="left:261.94px;top:546.26px;font-size:18.6px;color:#000;font-weight:normal;transform:scaleX(0.9818);transform-origin:0 0;">$1, 000</div>
<div class="t" style="left:573.04px;top:546.26px;font-size:18.6px;color:#000;font-weight:normal;transform:scaleX(1.2238);transform-origin:0 0;">september</div>
<div class="t" style="left:45.98px;top:579.26px;font-size:18.6px;color:#000;font-weight:normal;transform:scaleX(0.8735);transform-origin:0 0;">OCTOBER</div>
<div class="t" style="left:260.97px;top:579.26px;font-size:18.6px;color:#000;font-weight:normal;transform:scaleX(0.9829);transform-origin:0 0;">$1,050</div>
<div class="t" style="left:572.76px;top:579.26px;font-size:18.6px;color:#000;font-weight:normal;transform:scaleX(1.2693);transform-origin:0 0;">october</div>
<div class="t" style="left:46.64px;top:612.26px;font-size:18.6px;color:#000;font-weight:normal;transform:scaleX(0.9140);transform-origin:0 0;">NOVEMBER</div>
<div class="t" style="left:260.10px;top:612.26px;font-size:18.6px;color:#000;font-weight:normal;transform:scaleX(0.9798);transform-origin:0 0;">$5,000</div>
<div class="t" style="left:572.74px;top:612.26px;font-size:18.6px;color:#000;font-weight:normal;transform:scaleX(1.2424);transform-origin:0 0;">november</div>
<div class="t" style="left:46.55px;top:645.26px;font-size:18.6px;color:#000;font-weight:normal;transform:scaleX(0.8861);transform-origin:0 0;">DECEMBER</div>
<div class="t" style="left:260.95px;top:645.26px;font-size:18.6px;color:#000;font-weight:normal;transform:scaleX(0.9807);transform-origin:0 0;">$1,400</div>
<div class="t" style="left:572.47px;top:645.26px;font-size:18.6px;color:#000;font-weight:normal;transform:scaleX(1.2164);transform-origin:0 0;">december</div>
<div class="a" style="left:989px;top:238px;width:1px;height:440px;background:#9a9a9a;"></div>
<div class="a" style="left:1px;top:677px;width:989px;height:1px;background:#9a9a9a;"></div>
<div class="a" style="left:706px;top:648px;width:20px;height:20px;background:#fff;border:1px solid #a8a8a8"></div>
<svg style="left:0;top:0" width="1012" height="728" viewBox="0 0 1012 728"><rect x="709.5" y="651.5" width="5.5" height="4" fill="#3b7cf5" stroke="#888" stroke-width="1"/><rect x="715" y="651.5" width="6.5" height="4" fill="#fff" stroke="#888" stroke-width="1"/><rect x="709.5" y="655.5" width="5.5" height="4" fill="#fff" stroke="#888" stroke-width="1"/><g fill="#999"><rect x="709" y="661" width="1" height="1"/><rect x="715" y="661" width="1" height="1"/><rect x="709" y="663" width="1" height="1"/><rect x="711" y="663" width="1" height="1"/><rect x="713" y="663" width="1" height="1"/><rect x="715" y="663" width="1" height="1"/></g><path d="M720.5 659V664.5M717.8 661.6H723.2" stroke="#999" stroke-width="1"/></svg>
<div class="a" style="left:1px;top:678px;width:1010px;height:27px;background:#e6e6e6;"></div>
<div class="a" style="left:993px;top:210px;width:15px;height:15px;background:#fff;border:1px solid #ababab"></div>
<svg style="left:996px;top:215px;" width="9" height="5" viewBox="0 0 9 5"><path d="M0 5L4.5 0L9 5Z" fill="#777"/></svg>
<div class="a" style="left:993px;top:226px;width:15px;height:436px;background:#d9d9d9;"></div>
<div class="a" style="left:993px;top:226px;width:15px;height:283px;background:#fff;border:1px solid #ababab"></div>
<div class="a" style="left:993px;top:663px;width:15px;height:15px;background:#fff;border:1px solid #ababab"></div>
<svg style="left:996px;top:668px;" width="9" height="5" viewBox="0 0 9 5"><path d="M0 0L4.5 5L9 0Z" fill="#777"/></svg>
<svg style="left:607px;top:684px;" width="3" height="12" viewBox="0 0 3 12"><rect x="0" y="0" width="2" height="2" fill="#a0a0a0"/><rect x="0" y="5" width="2" height="2" fill="#a0a0a0"/><rect x="0" y="10" width="2" height="2" fill="#a0a0a0"/></svg>
<div class="a" style="left:624px;top:684px;width:15px;height:15px;background:#fff;border:1px solid #ababab"></div>
<svg style="left:629px;top:688px;" width="5" height="8" viewBox="0 0 5 8"><path d="M5 0V8L0 4Z" fill="#777"/></svg>
<div class="a" style="left:639px;top:684px;width:336px;height:15px;background:#d9d9d9;"></div>
<div class="a" style="left:639px;top:684px;width:295px;height:15px;background:#fff;border:1px solid #ababab"></div>
<div class="a" style="left:975px;top:684px;width:15px;height:15px;background:#fff;border:1px solid #ababab"></div>
<svg style="left:981px;top:688px;" width="5" height="8" viewBox="0 0 5 8"><path d="M0 0V8L5 4Z" fill="#777"/></svg>
<svg style="left:27px;top:686px;" width="5" height="9" viewBox="0 0 5 9"><path d="M5 0.5V8.5L0.5 4.5Z" fill="#c0c0c0"/></svg>
<svg style="left:57px;top:686px;" width="5" height="9" viewBox="0 0 5 9"><path d="M0 0.5V8.5L4.5 4.5Z" fill="#c0c0c0"/></svg>
<div class="a" style="left:101px;top:681px;width:1px;height:19px;background:#9f9f9f;"></div>
<div class="t" style="left:112.81px;top:683.57px;font-size:13.5px;color:#444;font-weight:normal;transform:scaleX(0.9279);transform-origin:0 0;">Sheet1</div>
<div class="a" style="left:166px;top:677px;width:65px;height:25px;background:#fff;border-left:1px solid #9a9a9a;border-right:1px solid #9a9a9a"></div>
<div class="a" style="left:167px;top:700px;width:63px;height:2px;background:#217346;"></div>
<div class="t" style="left:176.85px;top:683.57px;font-size:13.5px;color:#1e6b41;font-weight:bold;transform:scaleX(0.9604);transform-origin:0 0;">Sheet2</div>
<svg style="left:263px;top:682px;" width="18" height="18" viewBox="0 0 18 18"><circle cx="9" cy="8.8" r="7.6" fill="none" stroke="#777" stroke-width="1.2"/><path d="M9 5V12.6M5.2 8.8H12.8" stroke="#666" stroke-width="1.6"/></svg>
<div class="a" style="left:1px;top:705px;width:1010px;height:22px;background:#f3f2f1;"></div>
<div class="a" style="left:1px;top:705px;width:1010px;height:1px;background:#d4d4d4;"></div>
<div class="t" style="left:8.43px;top:709.84px;font-size:12px;color:#505050;font-weight:normal;transform:scaleX(0.9163);transform-origin:0 0;">Ready</div>
<div class="t" style="left:54.36px;top:709.84px;font-size:12px;color:#505050;font-weight:normal;transform:scaleX(0.9825);transform-origin:0 0;">Workbook Statistics</div>
<svg style="left:0;top:0" width="1012" height="728" viewBox="0 0 1012 728"><g fill="none" stroke="#333" stroke-width="1.1"><circle cx="183.9" cy="711.3" r="1.9"/><path d="M186.6 714.6C188.6 714.2 190.2 713.4 189.9 712.1C189.6 710.6 187.6 710.9 186.1 712.4C184.6 713.6 183.2 713.6 181.7 712.5C180.2 711 178.2 711 178.4 712.4C178.6 713.6 180.1 714.1 181.3 714.3"/><path d="M181.3 714.3L181 720.6C181 722.9 183.5 722.7 183.9 719.6"/><path d="M185.6 716.3L191.7 722.8M191.7 716.3L185.6 722.8"/></g></svg>
<div class="t" style="left:196.30px;top:709.84px;font-size:12px;color:#505050;font-weight:normal;transform:scaleX(0.9527);transform-origin:0 0;">Accessibility: Investigate</div>
<div class="t" style="left:631.05px;top:709.84px;font-size:12px;color:#505050;font-weight:normal;transform:scaleX(0.9761);transform-origin:0 0;">Count: 12</div>
<div class="a" style="left:700px;top:706px;width:40px;height:21px;background:#d4d4d4;"></div>
<svg style="left:712px;top:708px;" width="16" height="16" viewBox="0 0 16 16"><g fill="none" stroke="#444" stroke-width="1.2"><rect x="1.6" y="1.6" width="12" height="12"/><path d="M5.6 1.6V13.6M9.6 1.6V13.6M1.6 5.6H13.6M1.6 9.6H13.6"/></g></svg>
<svg style="left:752px;top:708px;" width="16" height="16" viewBox="0 0 16 16"><g fill="none" stroke="#444" stroke-width="1.2"><rect x="1.6" y="1.6" width="13" height="12.4"/><rect x="4.6" y="3.6" width="7" height="8"/><path d="M6 5.8H10.2M6 7.8H10.2M6 9.8H10.2"/></g></svg>
<svg style="left:792px;top:708px;" width="16" height="16" viewBox="0 0 16 16"><g fill="none" stroke="#444" stroke-width="1.2"><rect x="1.6" y="1.6" width="13" height="12.4"/><path d="M3.6 1.6V10.2H14.6M6.6 1.6V7.8M9.6 1.6V7.8H14.6"/></g></svg>
<div class="a" style="left:825px;top:716px;width:9px;height:1px;background:#555;"></div>
<div class="a" style="left:839px;top:716px;width:100px;height:2px;background:#777;"></div>
<div class="a" style="left:889px;top:712px;width:1px;height:9px;background:#555;"></div>
<div class="a" style="left:896px;top:710px;width:6px;height:12px;background:#6f6f6f;"></div>
<div class="a" style="left:943px;top:716px;width:9px;height:1px;background:#555;"></div>
<div class="a" style="left:947px;top:712px;width:1px;height:9px;background:#555;"></div>
<div class="t" style="left:962.95px;top:709.84px;font-size:12px;color:#505050;font-weight:normal;transform:scaleX(0.9590);transform-origin:0 0;">166%</div>
<div class="a" style="left:0;top:0;width:1012px;height:728px;border:1px solid #217346;border-top:none;pointer-events:none"></div></body></html>
